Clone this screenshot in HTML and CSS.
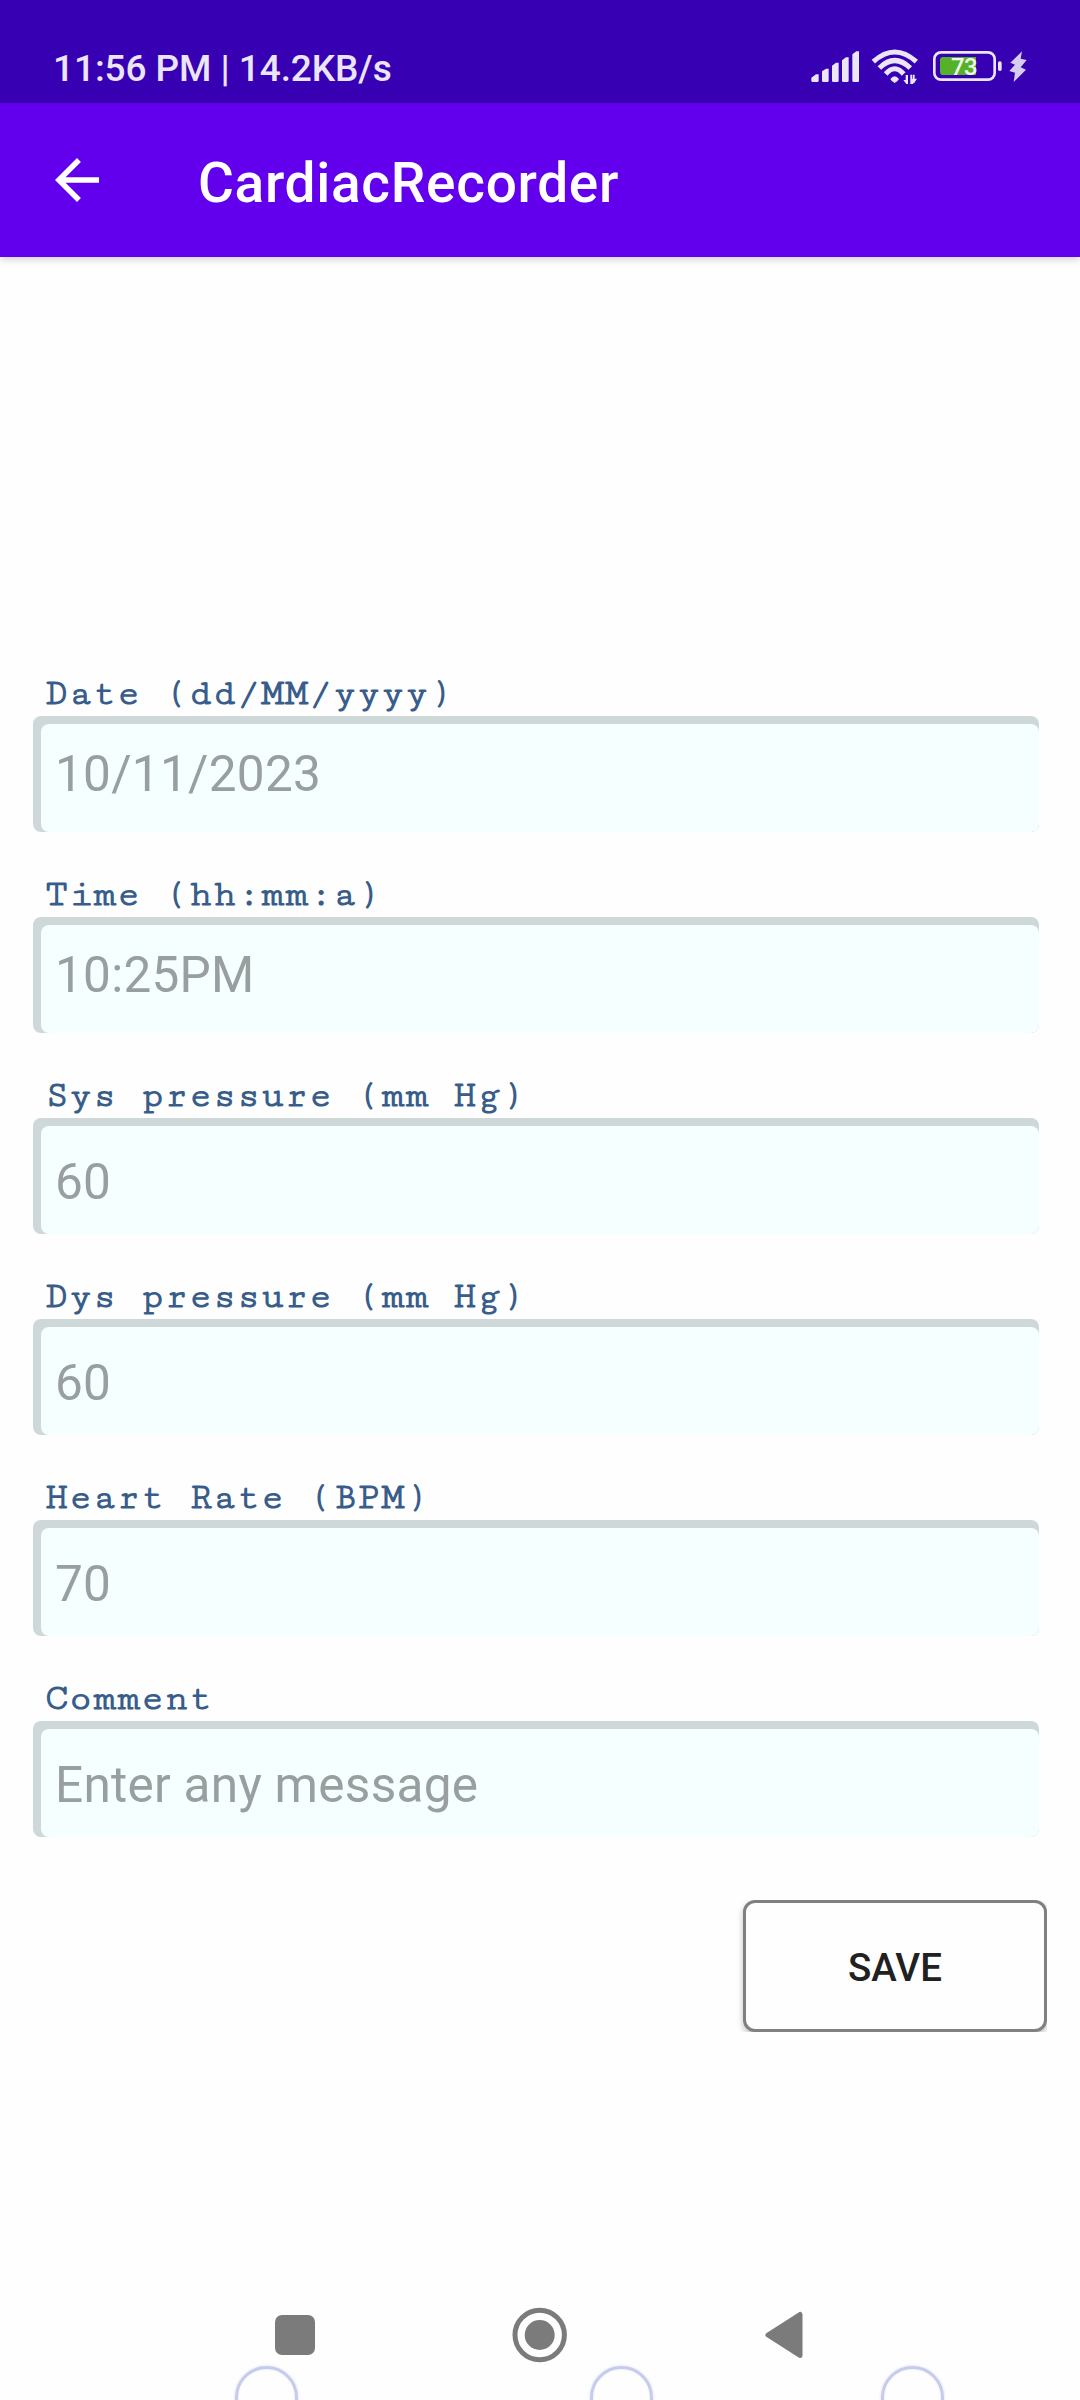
FILE: index.html
```html
<!DOCTYPE html>
<html lang="en">
<head>
<meta charset="utf-8">
<title>CardiacRecorder</title>
<link rel="stylesheet" href="styles.css">
</head>
<body>
<div class="screen">
  <div class="status-bar">
    <span class="status-text">11:56 PM | 14.2KB/s</span>
    <svg class="status-icons" viewBox="90 0 660 240" aria-hidden="true">
      <g fill="#ebe5f8">
        <path d="M94 143l14-10h8v19q0 4-4 4H98q-4 0-4-4zM126 124l12-8h8v36q0 4-4 4h-12q-4 0-4-4zM156 107l12-9h8v54q0 4-4 4h-12q-4 0-4-4zM186 91l12-9h8v70q0 4-4 4h-12q-4 0-4-4zM217 73l12-9h8v88q0 4-4 4h-12q-4 0-4-4z"/>
        <path d="M331 147Q344 130 357 147Q353 155 344 159Q335 155 331 147z"/>
        <path d="M370 150h7v-15h7v27h-5zM391 162v-28h6v12h2v16zM399 134h5v12h7l-9 14h-3z"/>
        <rect x="654" y="94" width="11" height="29" rx="5"/>
      </g>
      <g fill="none" stroke="#ebe5f8" stroke-width="15">
        <path d="M280 95Q344 37 409 95M298 114Q344 69 391 114M317 132Q344 101 371 132"/>
      </g>
      <rect x="463" y="67" width="181" height="82" rx="20" fill="none" stroke="#ebe5f8" stroke-width="8"/>
      <path d="M490 81h98v54h-98q-10 0-10-10V91q0-10 10-10z" fill="#54b128"/>
      <text class="battery-level" x="513" y="135">73</text>
      <path d="M726 64L691 98L705 104L688 123L705 128L701 156L738 119L722 112L740 90L722 86z" fill="#d7ccf0"/>
    </svg>
  </div>
  <header class="app-bar">
    <svg class="back" viewBox="0 0 24 24" aria-label="Back"><path fill="#fff" d="M20 11H7.83l5.59-5.59L12 4l-8 8 8 8 1.41-1.41L7.83 13H20v-2z"/></svg>
    <h1 class="title">CardiacRecorder</h1>
  </header>
  <main class="form">
    <div class="field"><div class="label">Date (dd/MM/yyyy)</div><div class="input high"><div class="value">10/11/2023</div></div></div>
    <div class="field"><div class="label">Time (hh:mm:a)</div><div class="input high"><div class="value">10:25PM</div></div></div>
    <div class="field"><div class="label">Sys pressure (mm Hg)</div><div class="input"><div class="value">60</div></div></div>
    <div class="field"><div class="label">Dys pressure (mm Hg)</div><div class="input"><div class="value">60</div></div></div>
    <div class="field"><div class="label">Heart Rate (BPM)</div><div class="input"><div class="value">70</div></div></div>
    <div class="field"><div class="label">Comment</div><div class="input"><div class="value">Enter any message</div></div></div>
    <div class="save-clip"><button class="save">SAVE</button></div>
  </main>
  <nav class="nav-bar">
    <svg class="nav-icon" viewBox="0 0 60 60"><rect x="10" y="10" width="40" height="40" rx="7" fill="#7b7b7b"/></svg>
    <svg class="nav-icon" viewBox="0 0 60 60"><circle cx="29.700" cy="30" r="24.700" fill="none" stroke="#7b7b7b" stroke-width="5"/><circle cx="29.700" cy="30" r="15" fill="#7b7b7b"/></svg>
    <svg class="nav-icon" viewBox="0 0 60 60"><path d="M13 30L45 9.500V50.500z" fill="#7b7b7b" stroke="#7b7b7b" stroke-width="5" stroke-linejoin="round"/></svg>
  </nav>
  <span class="bubble bubble-left"></span>
  <span class="bubble bubble-mid"></span>
  <span class="bubble bubble-right"></span>
</div>
</body>
</html>
```

FILE: styles.css
```css
* { box-sizing: border-box; }
body { margin: 0; background: #fefefe; font-family: Roboto, sans-serif; }
.screen { position: relative; display: flex; flex-direction: column; width: 1080px; height: 2400px; overflow: hidden; }

.status-bar { position: relative; z-index: 1; display: flex; justify-content: space-between; height: 103px; padding: 30px 50px 0 53px; background: #3700b3; flex: none; }
.status-text { padding-top: 17px; font-size: 37px; line-height: 44px; font-weight: 500; letter-spacing: -.08px; color: #ebe5f8; white-space: nowrap; }
.status-icons { width: 220px; height: 80px; flex: none; }
.battery-level { font-family: Roboto, sans-serif; font-size: 72px; font-weight: 500; fill: #f2f7ee; letter-spacing: -2px; }

.app-bar { display: flex; align-items: center; gap: 88px; height: 154px; padding: 0 44px; background: #6200ee; box-shadow: 0 2px 8px rgba(0, 0, 0, .2); flex: none; }
.back { width: 66px; height: 66px; }
.title { margin: 5px 0 0; font-size: 55px; line-height: 66px; font-weight: 500; letter-spacing: .7px; color: #fff; }

.form { display: flex; flex-direction: column; height: 1780px; padding: 411px 33px 0; }
.field { height: 201px; flex: none; }
.label { height: 48px; padding: 1px 0 0 12px; font-family: "Cutive Mono", "Liberation Mono", monospace; font-size: 38.5px; font-weight: 700; line-height: 48px; letter-spacing: .7px; color: #385d8a; white-space: pre; }
.input { width: 1006px; height: 116px; padding: 8px 0 0 8px; background: #cfd8d9; border-radius: 8px; overflow: hidden; }
.value { height: 108px; padding: 26px 0 0 14px; background: #f5ffff; border-radius: 8px; font-size: 49.5px; line-height: 60px; letter-spacing: .27px; color: #989f9e; white-space: nowrap; }
.input.high .value { padding-top: 20px; }
.save-clip { align-self: flex-end; width: 312px; height: 132px; margin-top: 26px; overflow: hidden; }
.save { display: block; width: 304px; height: 132px; margin: 0 0 0 8px; padding: 4px 0 0; border: 3px solid #808080; border-radius: 12px; background: #fefefe; box-shadow: 0 3px 6px rgba(0, 0, 0, .25); font: 500 38.5px/44px Roboto, sans-serif; color: #212121; }

.nav-bar { display: flex; gap: 185px; padding: 268px 0 0 265px; }
.nav-icon { width: 60px; height: 60px; flex: none; }
.bubble { position: absolute; top: 2366px; width: 63px; height: 63px; border: 3px solid #c5cbea; border-radius: 50%; box-shadow: 0 0 3px #d3d8f0, inset 0 0 2px #e3e6f6; }
.bubble-left { left: 235px; }
.bubble-mid { left: 590px; }
.bubble-right { left: 881px; }
```
